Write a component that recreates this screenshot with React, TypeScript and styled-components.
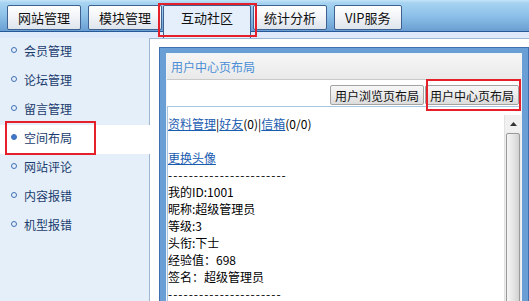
import React from "react";
import styled, { createGlobalStyle } from "styled-components";

const Global = createGlobalStyle`
  *, *::before, *::after { box-sizing: border-box; }
  html, body { margin: 0; padding: 0; background: #ffffff; }
  body {
    font-family: "Noto Sans CJK SC", "Noto Sans", sans-serif;
    font-size: 12px;
    color: #000;
  }
`;

const Page = styled.div`
  width: 529px;
  height: 301px;
  overflow: hidden;
  display: flex;
  flex-direction: column;
`;

const TopBar = styled.div`
  flex: none;
  height: 32px;
  padding: 0 0 1px 7px;
  display: flex;
  align-items: flex-end;
  gap: 7px;
  background: linear-gradient(#c4e4f8 0px, #a6d3f1 3px, #8cc0e8 16px, #6a9ed2 31px);
  border-bottom: 1px solid #27599a;
`;

const Tab = styled.div<{ $active?: boolean }>`
  position: relative;
  z-index: ${(p) => (p.$active ? 2 : 1)};
  height: ${(p) => (p.$active ? "33px" : "25px")};
  margin: ${(p) => (p.$active ? "0 -5px -8px -6px" : "0")};
  padding: ${(p) => (p.$active ? "3px 17px 0" : "0 10px")};
  display: flex;
  align-items: ${(p) => (p.$active ? "flex-start" : "center")};
  font-size: 13px;
  line-height: 18px;
  color: #111;
  border: 1px solid #3e6190;
  border-bottom: ${(p) => (p.$active ? "none" : "1px solid #3e6190")};
  border-radius: 2px 2px ${(p) => (p.$active ? "0 0" : "2px 2px")};
  background: ${(p) =>
    p.$active ? "#e4effb" : "linear-gradient(#ffffff, #f3f5f8 45%, #dde4ec)"};
  white-space: nowrap;
`;

const Mark = styled.span<{ $l: number; $t: number; $r: number; $b: number }>`
  position: absolute;
  left: ${(p) => p.$l}px;
  top: ${(p) => p.$t}px;
  right: ${(p) => p.$r}px;
  bottom: ${(p) => p.$b}px;
  border: 2px solid #e5202a;
  pointer-events: none;
  z-index: 5;
`;

const Strip = styled.div`
  flex: none;
  height: 6px;
  background: #deeafb;
`;

const Body = styled.div`
  flex: 1;
  display: flex;
  min-height: 0;
`;

const Sidebar = styled.div`
  flex: none;
  width: 149px;
  background: #e5eff9;
  display: flex;
  flex-direction: column;
`;

const NavItem = styled.div<{ $active?: boolean }>`
  position: relative;
  z-index: 1;
  height: 29px;
  margin-right: ${(p) => (p.$active ? "-1px" : "0")};
  padding: 0 0 5px 11px;
  display: flex;
  align-items: center;
  gap: 7px;
  background: ${(p) => (p.$active ? "#ffffff" : "transparent")};
  color: #1b3c6e;
  font-size: 12px;
`;

const Bullet = styled.span<{ $active?: boolean }>`
  flex: none;
  width: 6px;
  height: 6px;
  border-radius: 50%;
  border: 1.5px solid #3f70b6;
  background: ${(p) => (p.$active ? "#3f78cc" : "transparent")};
`;

const Main = styled.div`
  flex: 1;
  min-width: 0;
  background: #ffffff;
  border-top: 1px solid #9fb7d0;
  border-left: 1px solid #9fb7d0;
  padding: 8px 0 0 9px;
  overflow: hidden;
`;

const Frame = styled.div`
  width: 370px;
  height: 260px;
  border: 1px solid #3e70ad;
  background: #6a9fd6;
  padding: 5px 6px 0 6px;
`;

const Panel = styled.div`
  height: 100%;
  background: #ffffff;
  border: 1px solid #eef3f8;
  border-bottom: none;
  display: flex;
  flex-direction: column;
`;

const PanelHead = styled.div`
  flex: none;
  height: 26px;
  padding-left: 4px;
  display: flex;
  align-items: center;
  background: linear-gradient(#f6f6f6, #e9e9e9);
  border-bottom: 1px solid #c9c9c9;
  color: #4a8ed6;
  font-size: 12px;
`;

const Toolbar = styled.div`
  flex: none;
  height: 26px;
  padding: 5px 2px 0 0;
  display: flex;
  justify-content: flex-end;
  align-items: flex-start;
  gap: 1px;
`;

const Btn = styled.div`
  position: relative;
  height: 20px;
  padding: 0 4px;
  display: flex;
  align-items: center;
  border: 1px solid #a3a3a3;
  border-radius: 2px;
  background: linear-gradient(#f7f7f7, #ececec 50%, #dcdcdc);
  color: #111;
  font-size: 12px;
  white-space: nowrap;
`;

const Content = styled.div`
  flex: 1;
  min-height: 0;
  border-top: 1px solid #a9c6e3;
  border-left: 1px solid #a9c6e3;
  padding-top: 8px;
  display: flex;
`;

const TextArea = styled.div`
  flex: 1;
  min-width: 0;
  overflow: hidden;
  font-size: 12px;
  line-height: 17px;
  white-space: nowrap;
`;

const Line = styled.div<{ $dashes?: boolean }>`
  height: 17px;
  letter-spacing: ${(p) => (p.$dashes ? "1px" : "normal")};
`;

const A = styled.span`
  color: #1a5cb0;
  text-decoration: underline;
`;

const ScrollBar = styled.div`
  flex: none;
  width: 17px;
  background: #ececec;
  border-left: 1px solid #e2e2e2;
  display: flex;
  flex-direction: column;
  gap: 1px;
`;

const ArrowBtn = styled.div`
  flex: none;
  height: 17px;
  display: flex;
  align-items: center;
  justify-content: center;
  background: #f0f0f0;
`;

const Thumb = styled.div`
  flex: 1;
  margin: 0 1px;
  border: 1px solid #9a9a9a;
  border-radius: 2px;
  background: linear-gradient(90deg, #f4f4f4, #e6e6e6 50%, #d2d2d2);
`;

const navItems = ["会员管理", "论坛管理", "留言管理", "空间布局", "网站评论", "内容报错", "机型报错"];
const tabs = ["网站管理", "模块管理", "互动社区", "统计分析", "VIP服务"];

export default function App() {
  return (
    <>
      <Global />
      <Page>
        <TopBar>
          {tabs.map((t, i) => (
            <Tab key={t} $active={i === 2}>
              {t}
              {i === 2 && <Mark $l={-6} $t={-3} $r={-7} $b={1} />}
            </Tab>
          ))}
        </TopBar>
        <Strip />
        <Body>
          <Sidebar>
            {navItems.map((n, i) => (
              <NavItem key={n} $active={i === 3}>
                <Bullet $active={i === 3} />
                {n}
                {i === 3 && <Mark $l={5} $t={-4} $r={54} $b={-1} />}
              </NavItem>
            ))}
          </Sidebar>
          <Main>
            <Frame>
              <Panel>
                <PanelHead>用户中心页布局</PanelHead>
                <Toolbar>
                  <Btn>用户浏览页布局</Btn>
                  <Btn>
                    用户中心页布局
                    <Mark $l={0} $t={-7} $r={-3} $b={-7} />
                  </Btn>
                </Toolbar>
                <Content>
                  <TextArea>
                    <Line>
                      <A>资料管理</A>|<A>好友</A>(0)|<A>信箱</A>(0/0)
                    </Line>
                    <Line />
                    <Line>
                      <A>更换头像</A>
                    </Line>
                    <Line $dashes>-----------------------</Line>
                    <Line>我的ID:1001</Line>
                    <Line>昵称:超级管理员</Line>
                    <Line>等级:3</Line>
                    <Line>头衔:下士</Line>
                    <Line>经验值：698</Line>
                    <Line>签名：超级管理员</Line>
                    <Line $dashes>----------------------</Line>
                  </TextArea>
                  <ScrollBar>
                    <ArrowBtn>
                      <svg width="7" height="4" viewBox="0 0 7 4">
                        <path d="M0 4 L3.5 0 L7 4 Z" fill="#333" />
                      </svg>
                    </ArrowBtn>
                    <Thumb />
                  </ScrollBar>
                </Content>
              </Panel>
            </Frame>
          </Main>
        </Body>
      </Page>
    </>
  );
}
